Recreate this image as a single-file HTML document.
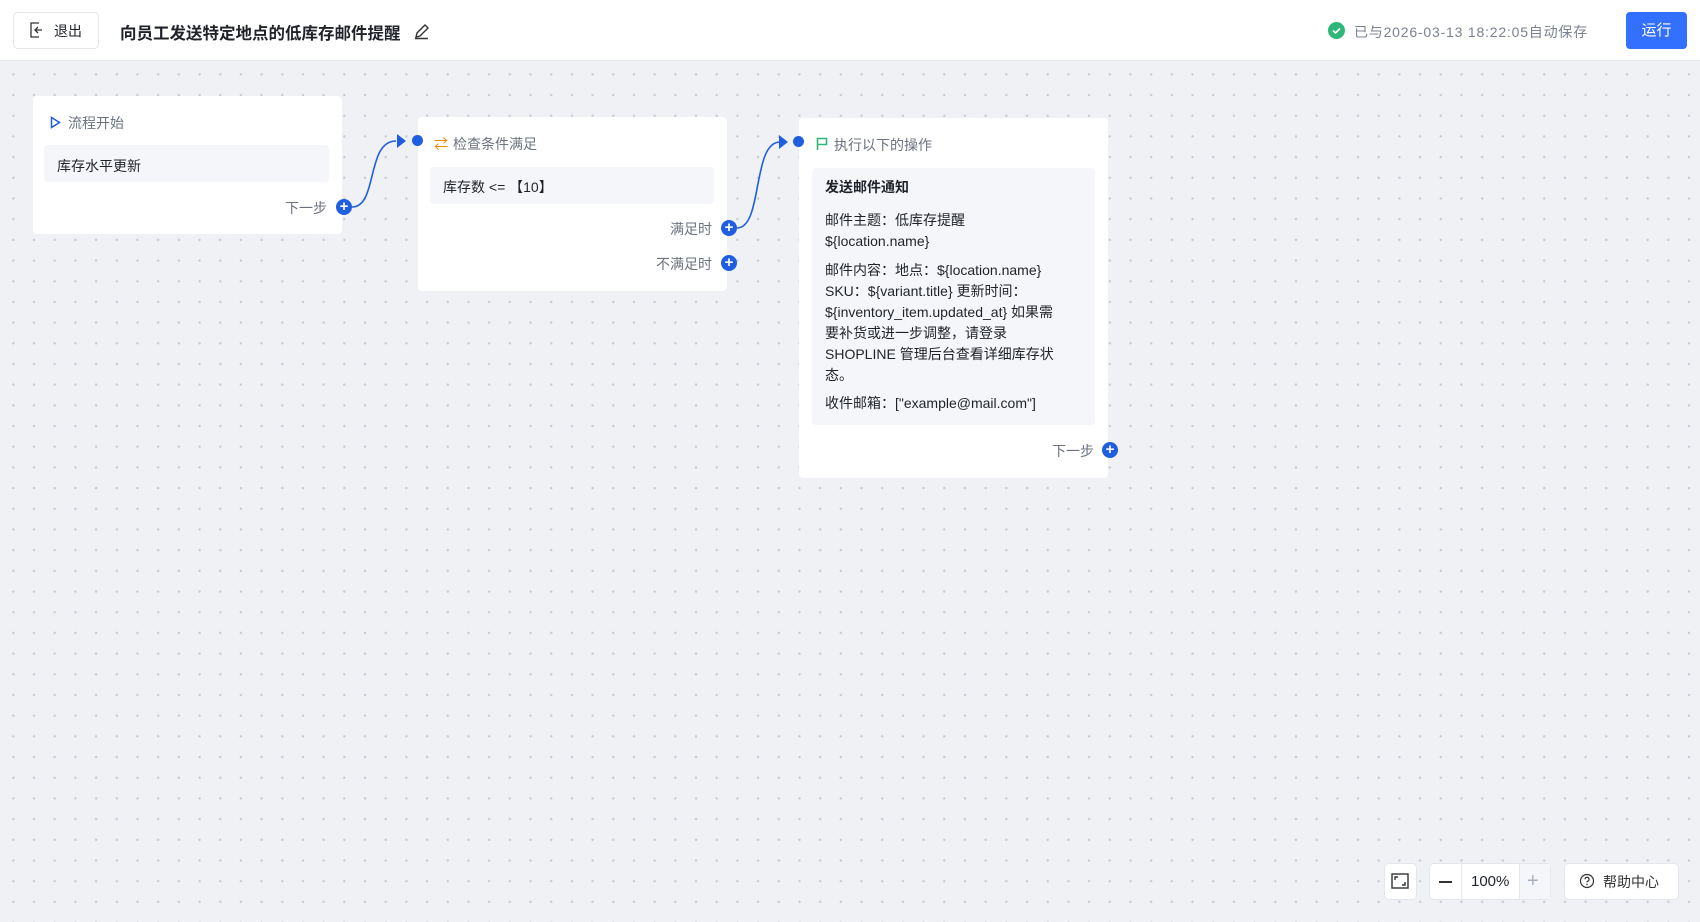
<!DOCTYPE html>
<html><head><meta charset="utf-8"><style>
*{box-sizing:border-box;margin:0;padding:0}
body{width:1700px;height:922px;overflow:hidden;font-family:"Liberation Sans","Noto Sans CJK SC",sans-serif;background:#f0f1f5;position:relative;color:#1f2329}
.hdr{position:absolute;left:0;top:0;width:1700px;height:61px;background:#fff;border-bottom:1px solid #e6e8ee}
.canvas{position:absolute;left:0;top:61px;width:1700px;height:861px;background-color:#f0f1f5;background-image:radial-gradient(circle,#c8ccd6 1.1px,transparent 1.4px);background-size:20.7px 20.7px;background-position:3px 3px}
.abs{position:absolute}
.node{position:absolute;background:#fff;border-radius:4px}
.nh{position:absolute;font-size:14px;color:#6b7280;white-space:nowrap}
.box{position:absolute;background:#f5f6fa;border-radius:4px}
.plus{position:absolute;width:16px;height:16px;border-radius:50%;background:#1f5ee0;color:#fff;font-size:15px;line-height:15px;text-align:center;font-weight:bold}
.lbl{position:absolute;font-size:14px;color:#6b7280;white-space:nowrap}
.dot{position:absolute;width:11px;height:11px;border-radius:50%;background:#1f5ee0}
.t{position:absolute;font-size:14px;white-space:nowrap;color:#1f2329}
.btn{position:absolute;background:#fff;border:1px solid #e3e6ec;border-radius:5px}
</style></head><body>
<div class="hdr">
 <div class="btn" style="left:13px;top:12px;width:86px;height:37px"></div>
 <svg class="abs" style="left:29px;top:22px" width="14" height="16" viewBox="0 0 14 16"><path d="M10 1H2v14h8M6 8h7M9 5l-3 3 3 3" fill="none" stroke="#333" stroke-width="1.3"/></svg>
 <div class="t" style="left:54px;top:21px;font-size:14px">退出</div>
 <div class="t" style="left:120px;top:20px;font-size:16.5px;font-weight:bold">向员工发送特定地点的低库存邮件提醒</div>
 <svg class="abs" style="left:413px;top:22px" width="18" height="18" viewBox="0 0 18 18"><path d="M3 15l1-4 8-8 3 3-8 8zM2 16.5h13" fill="none" stroke="#333" stroke-width="1.4"/></svg>
 <div class="abs" style="left:1328px;top:22px;width:17px;height:17px;border-radius:50%;background:#2fb77a"></div>
 <svg class="abs" style="left:1328px;top:22px" width="17" height="17"><path d="M5 8.5l2.5 2.5 4.5-4.5" fill="none" stroke="#fff" stroke-width="1.6"/></svg>
 <div class="t" style="left:1354px;top:22px;font-size:14px;color:#7a8190;letter-spacing:0.8px">已与2026-03-13 18:22:05自动保存</div>
 <div class="abs" style="left:1626px;top:12px;width:61px;height:37px;background:#3370ff;border-radius:4px;color:#fff;font-size:15px;text-align:center;line-height:37px">运行</div>
</div>
<div class="canvas"></div>
<svg class="abs" style="left:0;top:0" width="1700" height="922">
 <path d="M352 207 C378 207,366 141,396 141" fill="none" stroke="#1f5ee0" stroke-width="1.6"/>
 <path d="M397 134l9 7-9 7z" fill="#1f5ee0"/>
 <path d="M737 228 C763 228,752 142,780 142" fill="none" stroke="#1f5ee0" stroke-width="1.6"/>
 <path d="M779 135l9 7-9 7z" fill="#1f5ee0"/>
</svg>
<!-- node1 -->
<div class="node" style="left:33px;top:96px;width:309px;height:138px"></div>
<svg class="abs" style="left:50px;top:116px" width="11" height="13"><path d="M1.5 1.5v10l8-5z" fill="none" stroke="#1f5ee0" stroke-width="1.5"/></svg>
<div class="nh" style="left:68px;top:113px">流程开始</div>
<div class="box" style="left:44px;top:145px;width:285px;height:37px"></div>
<div class="t" style="left:57px;top:156px">库存水平更新</div>
<div class="lbl" style="left:285px;top:198px">下一步</div>
<div class="plus" style="left:336px;top:199px">+</div>
<!-- node2 -->
<div class="node" style="left:418px;top:117px;width:309px;height:174px"></div>
<div class="dot" style="left:412px;top:135px"></div>
<div class="nh" style="left:434px;top:134px;color:#f08a00">⇄</div>
<div class="nh" style="left:453px;top:134px">检查条件满足</div>
<div class="box" style="left:430px;top:167px;width:284px;height:37px"></div>
<div class="t" style="left:443px;top:177px">库存数 &lt;= 【10】</div>
<div class="lbl" style="left:670px;top:219px">满足时</div>
<div class="plus" style="left:721px;top:220px">+</div>
<div class="lbl" style="left:656px;top:254px">不满足时</div>
<div class="plus" style="left:721px;top:255px">+</div>
<!-- node3 -->
<div class="node" style="left:799px;top:118px;width:309px;height:360px"></div>
<div class="dot" style="left:793px;top:136px"></div>
<svg class="abs" style="left:816px;top:137px" width="12" height="14"><path d="M1.5 13V1.5h9v6h-9" fill="none" stroke="#2fb77a" stroke-width="1.6"/></svg>
<div class="nh" style="left:834px;top:135px">执行以下的操作</div>
<div class="box" style="left:812px;top:168px;width:283px;height:257px"></div>
<div class="t" style="left:825px;top:177px;font-weight:bold">发送邮件通知</div>
<div class="t" style="left:825px;top:210px;line-height:21px">邮件主题：低库存提醒<br>${location.name}</div>
<div class="t" style="left:825px;top:260px;line-height:21px">邮件内容：地点：${location.name}<br>SKU：${variant.title} 更新时间：<br>${inventory_item.updated_at} 如果需<br>要补货或进一步调整，请登录<br>SHOPLINE 管理后台查看详细库存状<br>态。</div>
<div class="t" style="left:825px;top:393px">收件邮箱：["example@mail.com"]</div>
<div class="lbl" style="left:1052px;top:441px">下一步</div>
<div class="plus" style="left:1102px;top:442px">+</div>
<!-- bottom controls -->
<div class="btn" style="left:1384px;top:863px;width:33px;height:37px"></div>
<svg class="abs" style="left:1391px;top:873px" width="18" height="16"><rect x="1" y="1" width="16" height="14" fill="none" stroke="#333" stroke-width="1.4"/><path d="M4 7V4h3M14 9v3h-3" fill="none" stroke="#333" stroke-width="1.4"/></svg>
<div class="btn" style="left:1429px;top:863px;width:122px;height:37px"></div>
<div class="abs" style="left:1461px;top:864px;width:1px;height:35px;background:#e3e6ec"></div>
<div class="abs" style="left:1519px;top:864px;width:31px;height:35px;background:#f5f6fa;border-left:1px solid #e3e6ec"></div>
<div class="abs" style="left:1439px;top:881px;width:13px;height:2px;background:#333"></div>
<div class="t" style="left:1471px;top:873px;font-size:15px">100%</div>
<div class="t" style="left:1527px;top:870px;font-size:20px;color:#aab0bb;font-weight:300">+</div>
<div class="btn" style="left:1564px;top:863px;width:115px;height:37px"></div>
<svg class="abs" style="left:1579px;top:873px" width="16" height="16"><circle cx="8" cy="8" r="6.5" fill="none" stroke="#333" stroke-width="1.2"/><path d="M6 6.3a2 2 0 1 1 2.6 1.9c-.5.2-.6.5-.6 1.2" fill="none" stroke="#333" stroke-width="1.2"/><circle cx="8" cy="11.4" r=".8" fill="#333"/></svg>
<div class="t" style="left:1603px;top:872px;color:#333">帮助中心</div>
</body></html>
